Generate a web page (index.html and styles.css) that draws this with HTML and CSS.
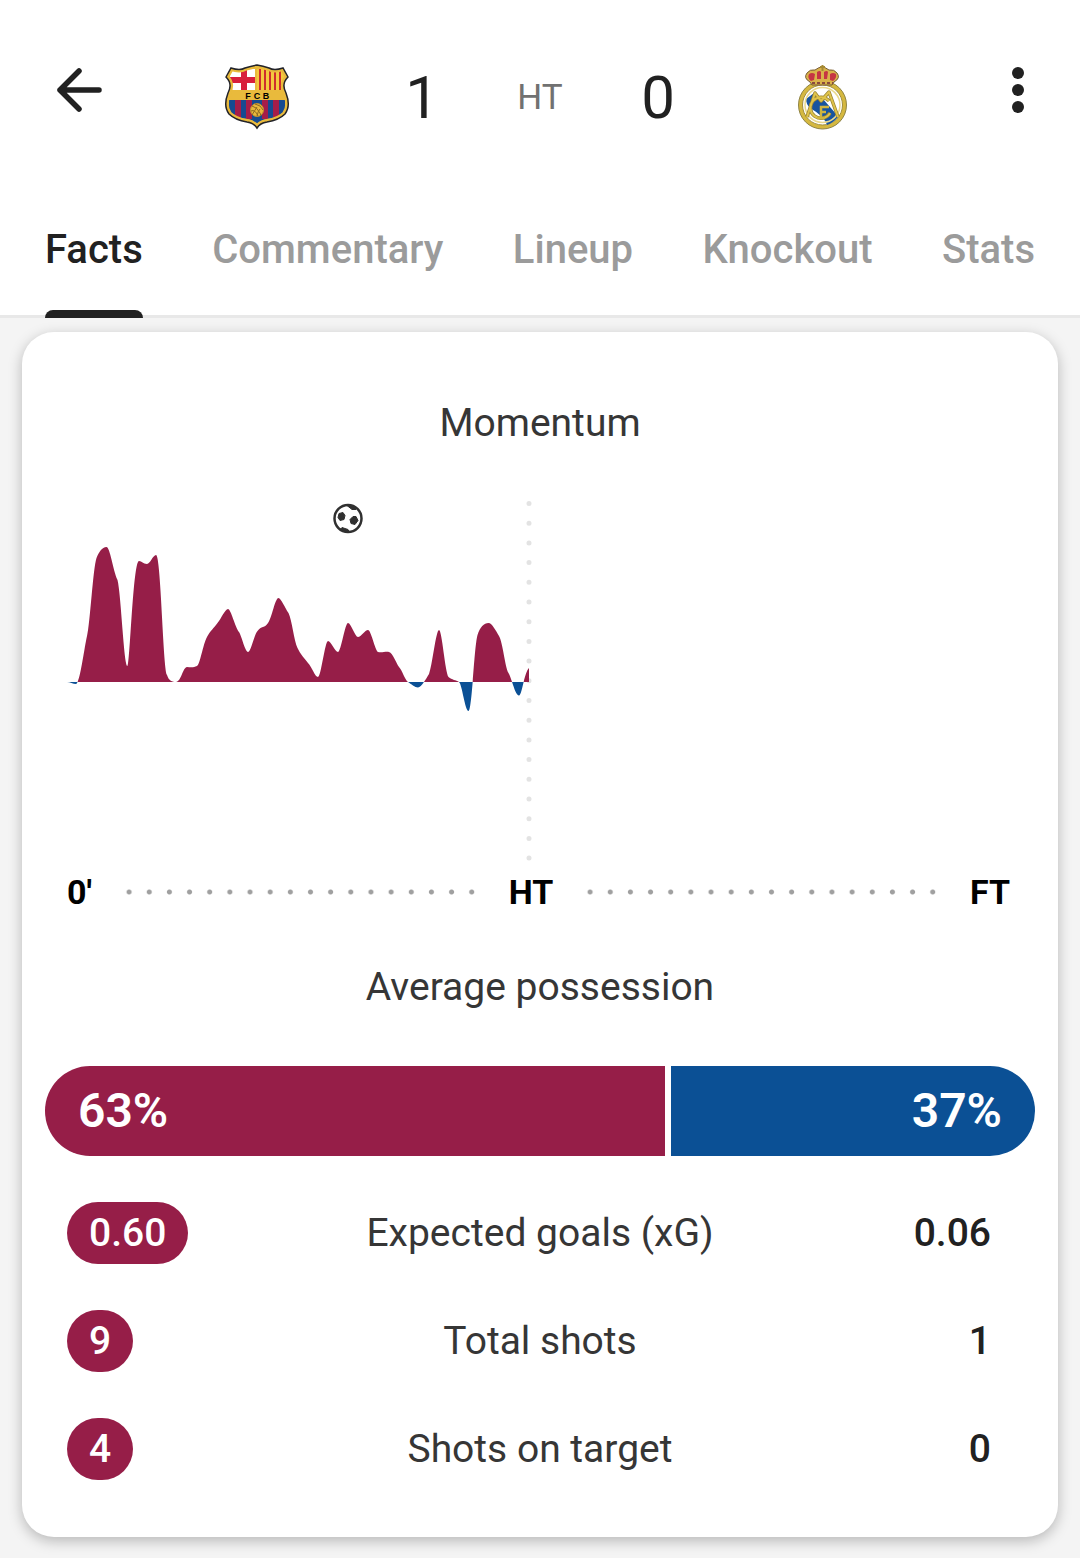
FILE: index.html
```html
<!DOCTYPE html>
<html lang="en">
<head>
<meta charset="utf-8">
<meta name="viewport" content="width=device-width, initial-scale=1">
<title>Match facts</title>
<link rel="stylesheet" href="styles.css">
</head>
<body>
<header class="topbar">
  <button class="icon-btn back" type="button" aria-label="Back">
    <svg width="68" height="68" viewBox="0 0 68 68" fill="none" stroke="#212121" stroke-width="5.500" stroke-linecap="round" stroke-linejoin="round"><path d="M34 15 15 34l19 19M15 34h39"/></svg>
  </button>
  <div class="scoreboard">
    <svg class="crest" viewBox="0 0 66 66" role="img" aria-label="Home team">
      <defs><clipPath id="shield"><path d="M7 4Q16 7 21 4Q27 2 33 1Q39 2 45 4Q50 7 59 4L64 13Q57 20 62 29Q67 42 61 50Q55 56 43 58Q36 59 33 64Q30 59 23 58Q11 56 5 50Q-1 42 4 29Q9 20 2 13Z"/></clipPath></defs>
      <g clip-path="url(#shield)">
        <path fill="#e9ba3c" d="M0 0h66v66H0z"/>
        <path fill="#fff" d="M6 5h25v21H6z"/>
        <path fill="#d81f3c" d="M17 5h6v21h-6zM5 13h26v6H5z"/>
        <path fill="#f4c93f" d="M33 5h27v21H33z"/>
        <path stroke="#cf2d2d" stroke-width="2" d="M36 5v21M41 5v21M46 5v21M51 7v19M56 7v19"/>
        <path fill="#164a91" d="M5 36h56v12q-3 6-18 7-7 1-10 6-3-5-10-6-15-1-18-7z"/>
        <path fill="#a51d49" d="M11 36h6v18h-6zM22 36h6v19h-6zM38 36h6v19h-6zM49 36h6v17h-6z"/>
      </g>
      <path fill="none" stroke="#e9ba3c" stroke-width="6" d="M7 4Q16 7 21 4Q27 2 33 1Q39 2 45 4Q50 7 59 4L64 13Q57 20 62 29Q67 42 61 50Q55 56 43 58Q36 59 33 64Q30 59 23 58Q11 56 5 50Q-1 42 4 29Q9 20 2 13Z" clip-path="url(#shield)"/>
      <path fill="none" stroke="#222329" stroke-width="1.500" d="M7 4Q16 7 21 4Q27 2 33 1Q39 2 45 4Q50 7 59 4L64 13Q57 20 62 29Q67 42 61 50Q55 56 43 58Q36 59 33 64Q30 59 23 58Q11 56 5 50Q-1 42 4 29Q9 20 2 13Z"/>
      <text class="crest-text" x="24" y="35">F</text><text class="crest-text" x="33" y="35">C</text><text class="crest-text" x="42" y="35">B</text>
      <circle cx="33" cy="46" r="6.500" fill="#e9b83c" stroke="#c08f2c"/>
      <path fill="none" stroke="#8c6921" d="M28 42q5 1 8 7l1 3M27 47q4-2 7 5M31 40q6 1 8 6M33 43q-2 3-5 8M36 45q-2 2-3 7"/>
    </svg>
    <div class="scores">
      <span class="score">1</span>
      <span class="phase">HT</span>
      <span class="score">0</span>
    </div>
    <svg class="crest" viewBox="0 0 66 66" role="img" aria-label="Away team">
      <circle cx="32.500" cy="41" r="22" fill="#fff" stroke="#d5b83f" stroke-width="4"/>
      <circle cx="32.500" cy="41" r="24" fill="none" stroke="#8f8446"/>
      <circle cx="32.500" cy="41" r="20" fill="none" stroke="#a08d3c"/>
      <path fill="#17549f" d="M16 35l8-6q4 5 9 6l14 16 1 2q-5 6-11 8-3-9-17-17-4-4-4-9z"/>
      <circle cx="32.500" cy="41" r="17.500" fill="none" stroke="#ead98b" stroke-width="1.500"/>
      <path fill="none" stroke="#9a8533" stroke-width="3.500" stroke-linejoin="round" d="M17 53 25 29l6 8 8-9 9 25M39 37a10.500 10.500 0 1 0 1 12"/>
      <path fill="none" stroke="#dfc34a" stroke-width="2" stroke-linejoin="round" d="M17 53 25 29l6 8 8-9 9 25M39 37a10.500 10.500 0 1 0 1 12"/>
      <path fill="none" stroke="#cfb43f" stroke-width="2.500" d="M31 54V43h8M31 48h5M27 54h8"/>
      <path fill="#d9b34a" stroke="#775b37" d="M20 18q-7-4-3-9 3-4 8-3 4-3 7-3t7 3q5-1 8 3 4 5-3 9l-2 3H22z"/>
      <path fill="#c63643" d="M19 10q3-2 6 0l-1 6-3 1q-4-3-2-7M27 8q3-2 4 0v7h-4zM34 8q3-2 4 0l-1 7h-3zM40 10q3-2 6 0 1 4-3 7l-3-1z"/>
      <path stroke="#8a4a3d" stroke-width="2" stroke-dasharray="3 2" d="M22 19h21"/>
      <path stroke="#a58a35" stroke-width="2" d="M32.500 1v6M30 3h5"/>
    </svg>
  </div>
  <button class="icon-btn menu" type="button" aria-label="More options">
    <svg width="68" height="68" viewBox="0 0 68 68" fill="#212121"><circle cx="34" cy="17" r="6"/><circle cx="34" cy="34" r="6"/><circle cx="34" cy="51" r="6"/></svg>
  </button>
</header>
<nav class="tabs">
  <a class="tab active" href="#facts" aria-current="page">Facts</a>
  <a class="tab" href="#commentary">Commentary</a>
  <a class="tab" href="#lineup">Lineup</a>
  <a class="tab" href="#knockout">Knockout</a>
  <a class="tab" href="#stats">Stats</a>
</nav>
<main class="card" id="facts">
  <section class="momentum">
    <h2 class="title">Momentum</h2>
    <svg class="chart" viewBox="67 490 946 380" role="img" aria-label="Momentum chart">
      <defs>
        <clipPath id="above"><path d="M67 490h462v192H67z"/></clipPath>
        <clipPath id="below"><path d="M67 682h462v188H67z"/></clipPath>
        <path id="wave" d="M67 682C70 682 73 684 76 684C80 683 84 649 87 636C90 625 93 568 96.500 558C99 552 102 547 106.500 547C110 547 113 570 117.500 580C121 593 124 666 127.500 666C130 666 133 561 139 561C142 561 143 564 147 564C150 564 153 555 156 555C161 555 163 668 167 675C169 681 172 682 176 682C181 682 183 667 187 667C190 667 193 668 197 666C200 665 203 644 207 637C210 631 214 628 217.500 623C221 619 225 609 228 609C231 609 235 627 239 632C242 637 245 652 248 652C251 652 254 635 257.500 631C261 626 265 628 268 623C272 618 275 598 278.500 598C281 598 285 608 288.500 613C292 620 294 641 297.500 648C300 654 305 659 308 663C312 667 315 677 318 677C321 677 325 641 328 641C331 641 335 652 338 652C341 652 345 623 348 623C351 623 355 637 358 637C361 637 365 630 368 630C371 630 375 650 378 652C382 653 386 651 389 652C393 653 396 663 399 667C402 670 405 680 408 682C411 684 415 687.500 418 687.500C421 687.500 426 679 429 674C432 667 436 630 439 630C442 630 445 672 448.500 677C452 680 456 680 459 682C462 684 465 711 468.500 711C472 711 474 648 477.500 635C480 627 484 623 488.500 623C492 623 496 631 499 636C503 643 505 667 508.500 673C512 679 515 695.500 519 695.500C522 695.500 524 673 529 668V682H67Z"/>
      </defs>
      <path class="midline" d="M529 503.500V860"/>
      <use href="#wave" fill="#961e48" clip-path="url(#above)"/>
      <use href="#wave" fill="#0b5095" clip-path="url(#below)"/>
      <g transform="translate(348 518.500)">
        <circle r="13.500" fill="none" stroke="#303030" stroke-width="2.500"/>
        <path fill="#303030" stroke="#303030" stroke-linejoin="round" d="M-9-5-5-6 -3-3 -4 1 -8 2 -10-1zM5-2 8-2 10 2 7 6 3 5 2 1zM-1-13 7-12 8-9 4-9zM-8 11-6 9 0 11 1 13-4 13z"/>
      </g>
    </svg>
    <div class="axis">
      <span>0'</span><i class="dots"></i><span>HT</span><i class="dots"></i><span>FT</span>
    </div>
  </section>
  <section>
    <h2 class="title">Average possession</h2>
    <div class="possession" style="grid-template-columns:63fr 37fr">
      <span class="share home">63%</span>
      <span class="share away">37%</span>
    </div>
  </section>
  <table class="stats">
    <tbody>
      <tr><td class="value"><span class="pill">0.60</span></td><th scope="row">Expected goals (xG)</th><td class="value right">0.06</td></tr>
      <tr><td class="value"><span class="pill">9</span></td><th scope="row">Total shots</th><td class="value right">1</td></tr>
      <tr><td class="value"><span class="pill">4</span></td><th scope="row">Shots on target</th><td class="value right">0</td></tr>
    </tbody>
  </table>
</main>
</body>
</html>
```
FILE: styles.css
```css
* { box-sizing: border-box; }

body {
  margin: 0;
  background: #f4f4f4;
  color: #212121;
  font-family: Roboto, "Liberation Sans", sans-serif;
  font-size: 39px;
}

.topbar {
  display: flex;
  justify-content: space-between;
  align-items: flex-start;
  padding: 56px 28px 44px 45px;
  background: #fff;
}

.icon-btn {
  flex: none;
  width: 68px;
  height: 68px;
  padding: 0;
  border: 0;
  background: none;
}

.icon-btn svg { display: block; }

.scoreboard {
  display: flex;
  flex: 1;
  justify-content: space-between;
  align-items: center;
  height: 82px;
  margin: 0 128px 0 111px;
}

.crest { width: 66px; height: 66px; }

.crest-text {
  font: bold 9px "Liberation Sans", sans-serif;
  text-anchor: middle;
}

.scores {
  display: grid;
  grid-template-columns: repeat(3, 118px);
  align-items: center;
  text-align: center;
}

.score { font-size: 60px; }
.phase { font-size: 35px; color: #717171; }

.tabs {
  display: flex;
  justify-content: space-between;
  height: 136px;
  padding: 0 45px;
  background: #fff;
  border-bottom: 3px solid #e8e8e8;
}

.tab {
  position: relative;
  line-height: 136px;
  font-size: 40px;
  font-weight: 500;
  color: #9b9b9b;
  text-decoration: none;
}

.active { color: #212121; }

.active::after {
  content: "";
  position: absolute;
  inset: auto 0 -3px;
  height: 8px;
  border-radius: 8px 8px 0 0;
  background: #212121;
}

.card {
  margin: 14px 22px 21px;
  padding: 60px 23px 34px;
  border-radius: 32px;
  background: #fff;
  box-shadow: 0 4px 14px rgba(0, 0, 0, 0.25);
}

.title {
  margin: 0;
  font-size: 39px;
  font-weight: 400;
  line-height: 62px;
  text-align: center;
  color: #363636;
}

.momentum { padding: 0 22px; }

.chart {
  display: block;
  width: 100%;
  margin-top: 36px;
}

.midline {
  stroke: #e3e3e3;
  stroke-width: 5;
  stroke-linecap: round;
  stroke-dasharray: 0 19.700;
}

.axis {
  display: flex;
  align-items: center;
  gap: 27px;
  height: 44px;
  margin-bottom: 42px;
  padding-right: 3px;
  font-size: 34px;
  font-weight: 700;
  color: #000;
}

.dots {
  flex: 1;
  height: 6px;
  background: radial-gradient(circle, #a0a0a0 2px, transparent 3px) 0 0 / 20px 6px round;
}

.possession {
  display: grid;
  gap: 6px;
  height: 90px;
  margin: 48px 0 23px;
  overflow: hidden;
  border-radius: 45px;
  color: #fff;
  font-size: 48px;
  font-weight: 600;
  line-height: 90px;
}

.share { padding: 0 33px; }
.home { background: #961e48; }
.away { background: #0b5095; text-align: right; }

.stats {
  width: 100%;
  table-layout: fixed;
  border-collapse: collapse;
}

.stats td,
.stats th {
  height: 108px;
  padding: 0;
  text-align: center;
}

.stats th {
  width: 40%;
  font-weight: 400;
  color: #363636;
}

.stats .value {
  padding: 0 22px;
  text-align: left;
  font-weight: 500;
}

.stats .right { padding-right: 44px; text-align: right; }

.pill {
  display: inline-block;
  vertical-align: middle;
  padding: 0 22px;
  border-radius: 31px;
  background: #961e48;
  color: #fff;
  line-height: 62px;
}
```
